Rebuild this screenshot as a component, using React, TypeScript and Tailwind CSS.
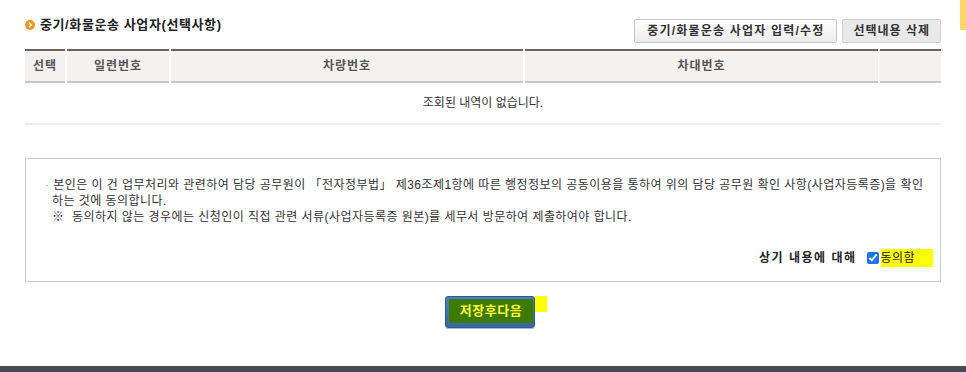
import React from "react";

const font = { fontFamily: '"Liberation Sans", "Noto Sans CJK KR", sans-serif' };

export default function App() {
  return (
    <div className="relative h-[372px] w-[966px] overflow-hidden bg-white text-[#333]" style={font}>
      <div className="absolute right-0 top-0 h-[30px] w-[6px] bg-[#fcd56b]" />
      <div className="flex h-[366px] flex-col px-[25px] pt-[19px]">
        {/* title + buttons */}
        <div className="flex items-start justify-between">
          <div className="flex items-center gap-[5px]">
            <svg viewBox="0 0 10 10" className="-mt-[3px] h-[10px] w-[10px]">
              <circle cx="5" cy="5" r="5" fill="#f19520" />
              <path d="M4 2.8 6.2 5 4 7.2" fill="none" stroke="#fff" strokeWidth="1.4" />
            </svg>
            <h2 className="-mt-[4px] text-[13px] font-bold tracking-[0.6px] text-[#222]">중기/화물운송 사업자(선택사항)</h2>
          </div>
          <div className="flex gap-[5px]">
            <button className="h-[24px] rounded-[2px] border border-[#c4c4c4] bg-gradient-to-b from-white to-[#ececec] px-[12px] text-[12px] font-bold tracking-[1.2px] text-[#333]">
              중기/화물운송 사업자 입력/수정
            </button>
            <button className="h-[24px] rounded-[2px] border border-[#cfcfcf] bg-[#e9e9e9] px-[10px] text-[12px] font-bold tracking-[1px] text-[#333]">
              선택내용 삭제
            </button>
          </div>
        </div>

        {/* table */}
        <table className="mt-[6px] w-full border-collapse text-[12px]">
          <thead>
            <tr className="h-[32px] border-t-2 border-b-2 border-t-[#666] border-b-[#c8c8c8] bg-[#f3f2f0] text-[12px] font-bold tracking-[1px] text-[#555]">
              <th className="w-[41px] border-r-2 border-white">선택</th>
              <th className="w-[104px] border-r-2 border-white">일련번호</th>
              <th className="w-[354px] border-r-2 border-white">차량번호</th>
              <th className="w-[355px] border-r-2 border-white">차대번호</th>
              <th />
            </tr>
          </thead>
          <tbody>
            <tr className="h-[42px] border-b-2 border-[#eeeeee]">
              <td colSpan={5} className="text-center text-[12px] text-[#333]">
                조회된 내역이 없습니다.
              </td>
            </tr>
          </tbody>
        </table>

        {/* agreement */}
        <div className="mt-[33px] flex h-[124px] flex-col border border-[#cccccc] px-[19px] pt-[18px] text-[12px] leading-[16px] tracking-[0.45px] text-[#333]">
          <p className="whitespace-nowrap pl-[7px] -indent-[7px]">
            <span className="text-[#999]">·</span> 본인은 이 건 업무처리와 관련하여 담당 공무원이 「전자정부법」 제36조제1항에 따른 행정정보의 공동이용을 통하여 위의 담당 공무원 확인 사항(사업자등록증)을 확인
            <br />
            하는 것에 동의합니다.
          </p>
          <p className="whitespace-nowrap pl-[7px]">※ &nbsp;동의하지 않는 경우에는 신청인이 직접 관련 서류(사업자등록증 원본)를 세무서 방문하여 제출하여야 합니다.</p>
          <div className="-mr-[12px] mt-[24px] flex items-center justify-end">
            <span className="text-[12px] font-bold tracking-[1.5px] text-[#222]">상기 내용에 대해</span>
            <input type="checkbox" defaultChecked className="ml-[10px] h-[12px] w-[12px] accent-[#1a73e8]" />
            <span className="ml-[2px] bg-[#ffff00] py-[1px] pr-[18px] text-[12px] text-[#111]">동의함</span>
          </div>
        </div>

        {/* save */}
        <div className="mt-[14px] flex justify-center pl-[14px]">
          <div className="relative">
            <button className="flex h-[32px] w-[90px] items-start justify-center overflow-hidden rounded-[3px] border border-[#2e5b94] bg-gradient-to-b from-[#4a80c0] to-[#3467a6] pt-[2px] text-[13px] font-bold tracking-[0.5px] text-[#ffff33] shadow-[0_1px_1px_rgba(0,0,0,0.3)]">
              <span className="ml-[2px] w-[84px] bg-[#3d7a00] py-[2px] text-center">저장후다음</span>
            </button>
            <span className="absolute -right-[12px] top-0 h-[16px] w-[12px] bg-[#ffff00]" />
          </div>
        </div>
      </div>
      <div className="h-[6px] bg-[#4a4a52]" />
    </div>
  );
}
